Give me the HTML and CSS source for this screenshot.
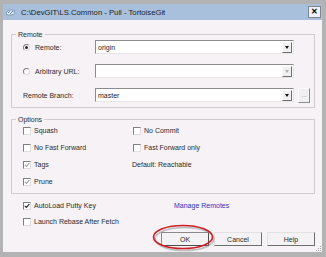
FILE: index.html
```html
<!DOCTYPE html>
<html lang="en">
<head>
  <meta charset="UTF-8">
  <title>Pull - TortoiseGit</title>
  <link rel="stylesheet" href="styles.css">
</head>
<body>
<div class="window">
  <div class="titlebar">
    <svg class="app-icon" width="11" height="9" viewBox="0 0 11 9">
      <path d="M1 6 C2 2 6 1 9 3 L10 5 C8 7 4 8 1 6 Z" fill="#e9eef5" stroke="#6c86a8" stroke-width=".8"/>
      <path d="M3 5 L5 3 M5 6 L8 3" stroke="#3f6fb0" stroke-width=".9"/>
      <circle cx="9.5" cy="2.5" r="1" fill="#8fb0d6"/>
    </svg>
    <span class="title">C:\DevGIT\LS.Common - Pull - TortoiseGit</span>
    <span class="close">&#x2715;</span>
  </div>

  <div class="client">
    <fieldset class="group remote">
      <legend>Remote</legend>
      <div class="field">
        <span class="radio on"></span><span>Remote:</span>
      </div>
      <div class="combo"><span class="value">origin</span><span class="drop"><i></i></span></div>
      <span></span>

      <div class="field">
        <span class="radio"></span><span>Arbitrary URL:</span>
      </div>
      <div class="combo"><span class="value"></span><span class="drop off"><i></i></span></div>
      <span></span>

      <div class="field plain">Remote Branch:</div>
      <div class="combo"><span class="value">master</span><span class="drop"><i></i></span></div>
      <span class="dots">...</span>
    </fieldset>

    <fieldset class="group options">
      <legend>Options</legend>
      <div class="field"><span class="check"></span>Squash</div>
      <div class="field"><span class="check"></span>No Commit</div>
      <div class="field"><span class="check"></span>No Fast Forward</div>
      <div class="field"><span class="check"></span>Fast Forward only</div>
      <div class="field"><span class="check dim"><svg viewBox="0 0 6 6"><path d="M.8 2.8 L2.4 4.4 L5.3 1.2"/></svg></span>Tags</div>
      <div class="field note">Default: Reachable</div>
      <div class="field"><span class="check dim"><svg viewBox="0 0 6 6"><path d="M.8 2.8 L2.4 4.4 L5.3 1.2"/></svg></span>Prune</div>
    </fieldset>

    <div class="extras">
      <div class="field"><span class="check"><svg viewBox="0 0 6 6"><path d="M.8 2.8 L2.4 4.4 L5.3 1.2"/></svg></span>AutoLoad Putty Key</div>
      <a class="link" href="#">Manage Remotes</a>
      <div class="field"><span class="check"></span>Launch Rebase After Fetch</div>
    </div>

    <div class="buttons">
      <button class="btn default">OK</button>
      <button class="btn">Cancel</button>
      <button class="btn">Help</button>
    </div>

    <svg class="mark" width="70" height="32" viewBox="0 0 70 32">
      <ellipse cx="34.5" cy="17" rx="29.5" ry="11.5" fill="none" stroke="#8c8c8c" stroke-opacity=".55" stroke-width="1.6"/>
      <ellipse cx="33" cy="15" rx="29.5" ry="11.5" fill="none" stroke="#cc1f24" stroke-width="1.6"/>
    </svg>

    <svg class="grip" width="7" height="7" viewBox="0 0 7 7">
      <g fill="#a8a8a8">
        <rect x="5" y="1" width="1" height="1"/>
        <rect x="3" y="3" width="1" height="1"/>
        <rect x="5" y="3" width="1" height="1"/>
        <rect x="1" y="5" width="1" height="1"/>
        <rect x="3" y="5" width="1" height="1"/>
        <rect x="5" y="5" width="1" height="1"/>
      </g>
    </svg>
  </div>
</div>
</body>
</html>
```

FILE: styles.css
```css
html, body {
  margin: 0;
  height: 257px;
  overflow: hidden;
}
body {
  background-color: #b3b3b3;
  font-family: "Liberation Sans", Arial, sans-serif;
  font-size: 7px;
  line-height: 9px;
  color: #2b2b2b;
}
.window {
  margin: 4px 4px 0 3px;
  height: 248px;
  display: flex;
  flex-direction: column;
}

/* title bar */
.titlebar {
  height: 16px;
  background-color: #a9c0dc;
  display: flex;
  align-items: center;
  padding: 0 1px 0 2px;
}
.app-icon {
  margin-right: 5px;
}
.title {
  font-size: 7.7px;
  color: #1c1c1c;
  flex: 1;
}
.close {
  width: 11px;
  height: 10px;
  background-color: #eef1f5;
  border: 1px solid #7d8794;
  font-size: 8px;
  font-weight: bold;
  line-height: 10px;
  text-align: center;
  color: #000;
}

/* client area */
.client {
  flex: 1;
  position: relative;
  background-color: #f6f2f5;
  padding: 0 7px 0 8px;
  display: flex;
  flex-direction: column;
}
.group {
  margin: 0;
  border: 1px solid #cfcbce;
  min-inline-size: 0;
}
.group legend {
  padding: 0 2px;
  margin-left: -7px;
  line-height: 9px;
}
.remote {
  margin-top: 10px;
  padding: 1px 4px 5px 11px;
  display: grid;
  grid-template-columns: 68px 199px 12px;
  grid-auto-rows: 14px;
  column-gap: 4px;
  row-gap: 10px;
  align-items: center;
}
.options {
  margin-top: 7px;
  padding: 1px 4px 6px 11px;
  display: grid;
  grid-template-columns: 110px auto;
  grid-auto-rows: 11px;
  row-gap: 6px;
  align-items: center;
}
.field {
  display: flex;
  align-items: center;
  gap: 3px;
}
.field .radio + span {
  margin-left: 2px;
}
.note {
  margin-left: -1px;
}

/* controls */
.radio {
  width: 5px;
  height: 5px;
  border: 1px solid;
  border-color: #7f7f7f #dcdcdc #dcdcdc #7f7f7f;
  border-radius: 50%;
  background-color: #fff;
  display: flex;
  align-items: center;
  justify-content: center;
}
.radio.on::after {
  content: "";
  width: 3px;
  height: 3px;
  border-radius: 50%;
  background-color: #222;
}
.check {
  width: 6px;
  height: 6px;
  border: 1px solid;
  border-color: #7f7f7f #dedede #dedede #7f7f7f;
  background-color: #fff;
  display: flex;
}
.check svg {
  width: 6px;
  height: 6px;
  fill: none;
  stroke: #1d1d1d;
  stroke-width: 1.1;
}
.check.dim svg {
  stroke: #a3a3a3;
}
.combo {
  height: 12px;
  background-color: #fff;
  border: 1px solid;
  border-color: #8c8c8c #e6e6e6 #e6e6e6 #8c8c8c;
  display: flex;
  align-items: center;
  padding-right: 1px;
}
.combo .value {
  flex: 1;
  padding-left: 2px;
  color: #1e1e1e;
}
.drop {
  width: 8px;
  height: 9px;
  background-color: #f1f0f1;
  border: 1px solid;
  border-color: #fafafa #6f6f6f #6f6f6f #fafafa;
  display: flex;
  align-items: center;
  justify-content: center;
}
.drop i {
  border-top: 3px solid #111;
  border-left: 2.5px solid transparent;
  border-right: 2.5px solid transparent;
}
.drop.off i {
  border-top-color: #b0b0b0;
}
.dots {
  height: 13px;
  background-color: #f1eff1;
  border: 1px solid;
  border-color: #fbfbfb #8a8a8a #8a8a8a #fbfbfb;
  font-size: 6px;
  line-height: 12px;
  text-align: center;
  color: #777;
}

/* bottom part */
.extras {
  margin-top: 6px;
  padding-left: 12px;
  display: grid;
  grid-template-columns: 151px auto;
  grid-auto-rows: 11px;
  row-gap: 5px;
  align-items: center;
}
.link {
  color: #2b36c8;
  text-decoration: none;
}
.buttons {
  margin-top: 5px;
  display: flex;
  justify-content: flex-end;
  gap: 5px;
}
.btn {
  width: 48px;
  height: 14px;
  padding: 0;
  font-family: inherit;
  font-size: 7px;
  color: #2b2b2b;
  background-color: #f4f2f4;
  border: 1px solid;
  border-color: #e2e2e2 #6e6e6e #6e6e6e #e2e2e2;
}
.btn.default {
  border-color: #8a8a8a #4e4e4e #4e4e4e #8a8a8a;
}

/* screenshot annotation and size grip */
.mark {
  position: absolute;
  left: 147px;
  top: 202px;
}
.grip {
  position: absolute;
  right: 0;
  bottom: 0;
}
```
